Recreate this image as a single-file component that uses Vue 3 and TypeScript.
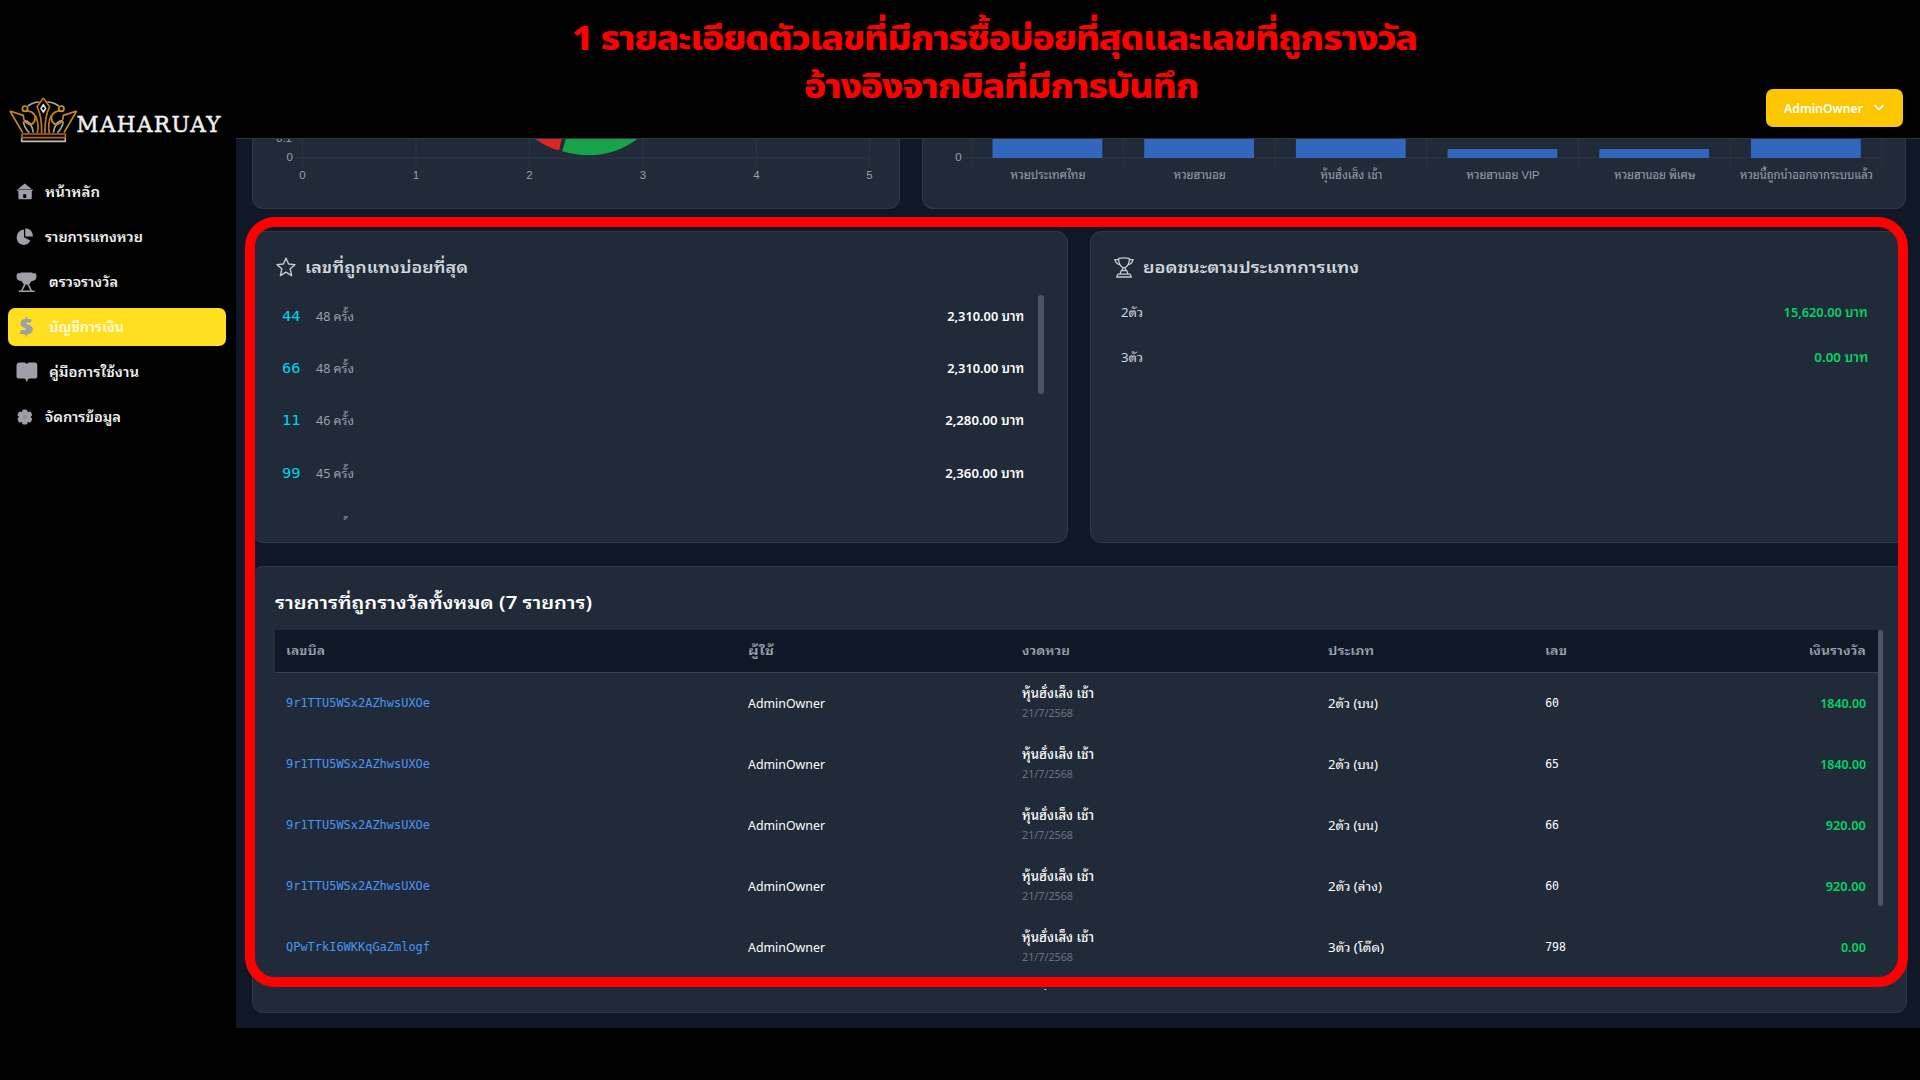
<script setup lang="ts">
import type { Directive } from 'vue'

// Scales a run of text horizontally so that it takes the given width in pixels.
const vFit: Directive<HTMLElement, number> = {
  mounted(el, binding) {
    const natural = el.getBoundingClientRect().width
    if (natural > 0) el.style.transform = `scaleX(${binding.value / natural})`
  },
}

const menu = [
  { icon: 'home', label: 'หน้าหลัก', w: 55 },
  { icon: 'pie', label: 'รายการแทงหวย', w: 98 },
  { icon: 'trophy', label: 'ตรวจรางวัล', w: 69, wide: true },
  { icon: 'dollar', label: 'บัญชีการเงิน', w: 75, wide: true, active: true },
  { icon: 'book', label: 'คู่มือการใช้งาน', w: 90, wide: true },
  { icon: 'gear', label: 'จัดการข้อมูล', w: 76 },
]

const lobes = [0, 60, 120, 180, 240, 300]

const xTicks = [49.5, 163, 276.5, 390, 503.5, 616.5]
const bars = [
  { label: 'หวยประเทศไทย', h: 20, w: 75 },
  { label: 'หวยฮานอย', h: 20, w: 52 },
  { label: 'หุ้นฮั่งเส็ง เช้า', h: 20, w: 62 },
  { label: 'หวยฮานอย VIP', h: 9, w: 73 },
  { label: 'หวยฮานอย พิเศษ', h: 9, w: 81 },
  { label: 'หวยนี้ถูกนำออกจากระบบแล้ว', h: 19, w: 133 },
]
const slot = 151.7

const frequent = [
  { num: '44', times: '48 ครั้ง', amount: '2,310.00 บาท', w: 77 },
  { num: '66', times: '48 ครั้ง', amount: '2,310.00 บาท', w: 77 },
  { num: '11', times: '46 ครั้ง', amount: '2,280.00 บาท', w: 79 },
  { num: '99', times: '45 ครั้ง', amount: '2,360.00 บาท', w: 79 },
  { num: '22', times: '45 ครั้ง', amount: '2,250.00 บาท', w: 79 },
]

const wins = [
  { type: '2ตัว', amount: '15,620.00 บาท', w: 84 },
  { type: '3ตัว', amount: '0.00 บาท', w: 54 },
]

const rows = [
  { id: '9r1TTU5WSx2AZhwsUXOe', type: '2ตัว (บน)', tw: 50, num: '60', prize: '1840.00', pw: 46 },
  { id: '9r1TTU5WSx2AZhwsUXOe', type: '2ตัว (บน)', tw: 50, num: '65', prize: '1840.00', pw: 46 },
  { id: '9r1TTU5WSx2AZhwsUXOe', type: '2ตัว (บน)', tw: 50, num: '66', prize: '920.00', pw: 40 },
  { id: '9r1TTU5WSx2AZhwsUXOe', type: '2ตัว (ล่าง)', tw: 54, num: '60', prize: '920.00', pw: 40 },
  { id: 'QPwTrkI6WKKqGaZmlogf', type: '3ตัว (โต๊ด)', tw: 56, num: '798', prize: '0.00', pw: 25 },
  { id: 'QPwTrkI6WKKqGaZmlogf', type: '3ตัว (โต๊ด)', tw: 56, num: '789', prize: '0.00', pw: 25 },
]
</script>

<template>
  <div class="page">
    <aside class="sidebar">
      <svg class="logo" width="226" height="50" viewBox="0 0 226 50">
        <g transform="translate(0,-14) scale(0.33333)" fill="none" stroke-width="5" stroke-linejoin="round">
          <path d="M84 78Q100 66 118 66M142 66Q160 66 176 78" stroke="#a9a9ad" />
          <path d="M72 122Q94 122 100 158M188 122Q166 122 160 158M70 124Q74 146 88 158M190 124Q186 146 172 158" stroke="#a6a6aa" />
          <path d="M30 93L68 158M30 93L70 106Q70 130 90 134Q108 130 105 108Q100 94 78 92" stroke="#c98a14" />
          <path d="M230 93L192 158M230 93L190 106Q190 130 170 134Q152 130 155 108Q160 94 182 92" stroke="#c98a14" />
          <path d="M130 54L149 80Q134 108 135 160M130 54L111 80Q126 108 125 160M106 106Q118 130 112 160M154 106Q142 130 148 160" stroke="#c07a14" />
          <circle cx="75" cy="86" r="8" stroke="#cf9515" /><circle cx="184" cy="86" r="8" stroke="#cf9515" />
          <path d="M130 74L137 85L130 96L123 85Z" stroke="#e0e0e0" />
          <path d="M66 162H196V173H66Z" stroke="#b06a16" />
          <path d="M65 175V184H196V175" stroke="#bdbdbd" />
        </g>
        <text x="76.5" y="38" font-size="21.5" textLength="144" lengthAdjust="spacing" class="brand">MAHARUAY</text>
      </svg>
      <nav class="menu">
        <a v-for="m in menu" :key="m.label" class="item" :class="{ active: m.active, wide: m.wide }">
          <svg class="ico" width="22" height="22" viewBox="0 0 22 22" fill="#9f9fa9">
            <path v-if="m.icon === 'home'" d="M8.8 2.6 15.6 8H2ZM.8 8.6H16.8V9.8H15.8V17Q15.8 18.2 14.6 18.2H3.6Q2.4 18.2 2.4 17V9.8H.8ZM7.2 13.2V17H10.2V13.2Z" fill-rule="evenodd" />
            <g v-else-if="m.icon === 'pie'"><path d="M8 3.4V11.2L14.4 14.6Q12.4 18.8 8 19Q.8 18.4.6 11.2Q1 4.4 8 3.4Z" /><path d="M9.2 2.2Q16.6 2.8 17 10.4H9.2Z" /></g>
            <g v-else-if="m.icon === 'trophy'"><path d="M4.6 1.4H16.4V2.2H19Q20.4 2.4 20.4 4V6.4Q20 9.6 15.6 10Q13.8 13.2 12 13.8H9Q7.2 13.2 5.4 10Q1 9.6.6 6.4V4Q.6 2.4 2 2.2H4.6Z" /><path d="M8.8 13.4 5.6 20M12.2 13.4 15.4 20M2.6 20.3H18.6" stroke="#9f9fa9" stroke-width="1.6" fill="none" /></g>
            <path v-else-if="m.icon === 'dollar'" d="M9.6 1H11.2V2.8L15.8 3.6 14.8 6.8 11 6.6Q9.4 7 11.6 8.4Q17 9.6 17 13.6Q16.6 17.6 11.2 18.4V20.6H9.6V18.6L3.8 17.8 5 14H9.4Q11 13.4 8.8 12Q4.4 10.6 4.4 7Q4.8 3.4 9.6 2.8Z" />
            <path v-else-if="m.icon === 'book'" d="M3.2 1.6H8.4Q10 1.8 10.8 3Q11.6 1.8 13.2 1.6H19Q21.2 1.8 21.3 4V15.6Q21.2 17.4 19.4 17.5H13Q11.6 17.8 11.3 20.6H10.3Q10 17.8 8.6 17.5H2.4Q.6 17.4.5 15.6V4Q.6 1.8 3.2 1.6Z" />
            <g v-else>
              <circle cx="8.8" cy="11" r="6" />
              <rect v-for="a in lobes" :key="a" x="6.2" y="3.4" width="5.2" height="6" rx="1.6" :transform="`rotate(${a} 8.8 11)`" />
              <circle cx="8.8" cy="11" r="2.2" fill="#8d8d98" />
            </g>
          </svg>
          <span v-fit="m.w" class="fit">{{ m.label }}</span>
        </a>
      </nav>
    </aside>

    <main class="main">
      <header class="topbar">
        <button class="user">
          <span v-fit="79" class="fit">AdminOwner</span>
          <svg width="12" height="8" viewBox="0 0 12 8"><path d="M1.5 1.2 6 5.6 10.5 1.2" fill="none" stroke="#fff" stroke-width="1.7" /></svg>
        </button>
      </header>

      <div class="content">
        <section class="charts">
          <div class="card chart donut">
            <svg width="647" height="70" viewBox="0 0 647 70">
              <g stroke="#2a3442" stroke-width="1">
                <path d="M43 19H616.5" /><path v-for="x in xTicks" :key="x" :d="`M${x} 0V27`" />
              </g>
              <path d="M282.4 0Q294 8.4 306 11.4L308.8 0Z" fill="#dc2626" />
              <path d="M312.6 0 309.2 12.2Q351 24.5 384.4 0Z" fill="#16a34a" />
              <g class="tick">
                <text x="39" y="2.6" text-anchor="end">0.1</text><text x="40" y="22" text-anchor="end">0</text>
                <text v-for="(x, i) in xTicks" :key="i" :x="x" y="39.8" text-anchor="middle">{{ i }}</text>
              </g>
            </svg>
          </div>
          <div class="card chart">
            <svg width="983" height="70" viewBox="0 0 983 70">
              <g stroke="#2a3442" stroke-width="1">
                <path d="M42 19H960" /><path v-for="n in 7" :key="n" :d="`M${48.7 + (n - 1) * slot} 0V27`" />
              </g>
              <rect v-for="(b, i) in bars" :key="i" :x="69.5 + i * slot" :y="19 - b.h" width="109.8" :height="b.h" fill="#3267bd" />
              <g class="tick">
                <text x="35.5" y="22" text-anchor="middle">0</text>
                <text v-for="(b, i) in bars" :key="i" :x="125 + i * slot - b.w / 2" y="40" :textLength="b.w" lengthAdjust="spacingAndGlyphs">{{ b.label }}</text>
              </g>
            </svg>
          </div>
        </section>

        <section class="pair">
          <div class="card panel">
            <h3 class="ptitle">
              <svg width="20" height="20" viewBox="0 0 20 20"><path d="M10 1.2 12.6 7 19 7.6 14.2 11.8 15.6 18.6 10 15.2 4.4 18.6 5.8 11.8 1 7.6 7.4 7Z" fill="none" stroke="#c6cad2" stroke-width="1.4" stroke-linejoin="round" /></svg>
              <span v-fit="163" class="fit">เลขที่ถูกแทงบ่อยที่สุด</span>
            </h3>
            <div class="scroll">
              <div class="flist">
                <div v-for="f in frequent" :key="f.num" class="frow">
                  <span class="fnum"><span v-fit="18.5" class="fit">{{ f.num }}</span></span>
                  <span class="ftimes"><span v-fit="38" class="fit">{{ f.times }}</span></span>
                  <span v-fit="f.w" class="fit right famount">{{ f.amount }}</span>
                </div>
              </div>
              <div class="bar"></div>
            </div>
          </div>
          <div class="card panel">
            <h3 class="ptitle">
              <svg width="20" height="21" viewBox="0 0 20 21" fill="none" stroke="#c6cad2" stroke-width="1.3" stroke-linejoin="round">
                <path d="M4.6 1.4Q10 .2 15.4 1.4Q15.4 8.4 10.6 10.8H9.4Q4.6 8.4 4.6 1.4ZM4.6 2.6H.9Q1.4 6.2 6 8M15.4 2.6H19.1Q18.6 6.2 14 8M9 10.8Q9 13 7.2 13.6L6 17.2H14L12.8 13.6Q11 13 11 10.8M7 13.7H13M4 17.2H16L17.4 20H2.6Z" />
              </svg>
              <span v-fit="216" class="fit">ยอดชนะตามประเภทการแทง</span>
            </h3>
            <div class="wlist">
              <div v-for="w in wins" :key="w.type" class="wrow">
                <span v-fit="22" class="fit">{{ w.type }}</span>
                <span v-fit="w.w" class="fit right wamount">{{ w.amount }}</span>
              </div>
            </div>
          </div>
        </section>

        <section class="card listing">
          <h2 class="ltitle"><span v-fit="317" class="fit">รายการที่ถูกรางวัลทั้งหมด (7 รายการ)</span></h2>
          <div class="tscroll">
            <div class="table">
              <div class="tr th">
                <span><span v-fit="39" class="fit">เลขบิล</span></span>
                <span><span v-fit="26" class="fit">ผู้ใช้</span></span>
                <span><span v-fit="48" class="fit">งวดหวย</span></span>
                <span><span v-fit="46" class="fit">ประเภท</span></span>
                <span><span v-fit="22" class="fit">เลข</span></span>
                <span class="r"><span v-fit="57" class="fit right">เงินรางวัล</span></span>
              </div>
              <div v-for="(r, i) in rows" :key="i" class="tr td">
                <span class="id"><span v-fit="144" class="fit">{{ r.id }}</span></span>
                <span><span v-fit="77" class="fit">AdminOwner</span></span>
                <span class="draw">
                  <span v-fit="72" class="fit name">หุ้นฮั่งเส็ง เช้า</span>
                  <span v-fit="51" class="fit date">21/7/2568</span>
                </span>
                <span><span v-fit="r.tw" class="fit">{{ r.type }}</span></span>
                <span class="num">{{ r.num }}</span>
                <span class="r prize"><span v-fit="r.pw" class="fit right">{{ r.prize }}</span></span>
              </div>
            </div>
            <div class="tbar"></div>
          </div>
        </section>
      </div>
    </main>

    <div class="caption">
      <div class="cline first"><span v-fit="845" class="fit mid">1 รายละเอียดตัวเลขที่มีการซื้อบ่อยที่สุดและเลขที่ถูกรางวัล</span></div>
      <div class="cline second"><span v-fit="394" class="fit mid">อ้างอิงจากบิลที่มีการบันทึก</span></div>
    </div>
    <div class="frame"></div>
  </div>
</template>

<style>
body { background: #000; }
</style>

<style scoped>
* { box-sizing: border-box; }
.page { position: relative; display: flex; width: 1920px; height: 1080px; overflow: hidden; background: #000; color: #fff; font-family: "Noto Sans", "Noto Sans Thai Looped", "Noto Looped Thai", "Loma", "Waree", "Garuda", "Noto Sans Thai", sans-serif; font-size: 13px; line-height: 20px; }
.fit { display: inline-block; white-space: nowrap; transform-origin: left center; vertical-align: top; }
.fit.right { transform-origin: right center; }
.fit.mid { transform-origin: center; }
.sidebar { width: 236px; flex: none; padding-top: 94px; }
.logo { display: block; }
.brand { font-family: "DejaVu Serif", serif; fill: #f0f0f0; stroke: #f0f0f0; stroke-width: 0.5; }
.menu { display: flex; flex-direction: column; padding: 29px 10px 0 8px; gap: 7px; }
.item { display: flex; align-items: center; height: 38px; padding-left: 8px; border-radius: 7px; font-weight: 600; line-height: 20px; color: #f0f0f0; gap: 7px; }
.item.wide { gap: 11px; }
.item.active { background: #ffdf20; color: #fffbe0; }
.ico { flex: none; }
.main { flex: 1; min-width: 0; }
.topbar { height: 138px; display: flex; justify-content: flex-end; padding: 89px 17px 0 0; }
.user { display: flex; align-items: center; justify-content: space-between; width: 137px; height: 38px; padding: 0 18px; border: 0; border-radius: 7px; background: #fdc700; color: #fff; font-family: inherit; font-size: 13px; font-weight: 600; line-height: 20px; }
.content { height: 890px; overflow: hidden; border-top: 1px solid #2b3544; background: #101726; padding: 0 13.5px 0 15.5px; }
.card { background: #212a38; border: 1px solid #2e3846; border-radius: 11px; }
.charts { display: flex; gap: 22px; }
.chart { width: 984px; height: 70px; border-top: 0; border-radius: 0 0 11px 11px; overflow: hidden; }
.chart.donut { width: 648.5px; flex: none; }
.chart svg { display: block; }
.tick { fill: #99a1ad; font-family: "Liberation Sans", "Noto Sans Thai Looped", "Noto Looped Thai", "Loma", "Waree", "Garuda", "Noto Sans Thai", sans-serif; font-size: 11.5px; }
.pair { display: flex; gap: 22px; margin-top: 22px; }
.panel { flex: 1; height: 312px; padding: 20px 23px 0; }
.ptitle { display: flex; align-items: center; gap: 9px; height: 30px; margin: 0; color: #d1d5dc; font-size: 16px; font-weight: 600; line-height: 28px; }
.scroll { display: flex; justify-content: space-between; height: 225px; margin-top: 13px; overflow: hidden; }
.flist { width: 749px; }
.frow { display: flex; align-items: center; height: 52.3px; padding: 0 0 10.5px 6px; }
.fnum { width: 34.5px; font-family: "DejaVu Sans Mono", monospace; font-size: 14px; color: #00d3f2; }
.ftimes { flex: 1; color: #99a1af; }
.famount { font-weight: 600; }
.bar { width: 6px; height: 99px; border-radius: 3px; background: #4a5565; }
.wlist { margin-top: 7.5px; padding: 0 14.5px 0 6.5px; }
.wrow { display: flex; justify-content: space-between; align-items: center; height: 45px; color: #d1d5dc; }
.wamount { font-weight: 600; color: #00d566; }
.listing { height: 447px; margin-top: 23px; padding: 21px 22px 0; }
.ltitle { height: 30px; margin: 0; font-size: 17px; font-weight: 600; line-height: 30px; }
.tscroll { display: flex; height: 359.5px; margin-top: 12px; overflow: hidden; }
.table { width: 1603px; flex: none; }
.tr { display: grid; grid-template-columns: 462px 274px 305.5px 217px 1fr 130px; align-items: center; padding: 0 11.5px; }
.th { height: 42.5px; padding-top: 1px; background: #101726; border-bottom: 1px solid #364153; color: #99a1af; font-size: 12px; font-weight: 600; }
.td { height: 61.1px; border-bottom: 1px solid #202b3a; }
.r { text-align: right; }
.id { color: #4795f5; font-family: "DejaVu Sans Mono", monospace; font-size: 11.5px; }
.num { padding-left: 0.7px; font-family: "DejaVu Sans Mono", monospace; font-size: 11.5px; }
.draw { display: flex; flex-direction: column; align-items: flex-start; line-height: 20px; }
.name { font-weight: 500; }
.date { color: #6a7282; font-size: 11px; }
.prize { color: #00d566; font-weight: 600; }
.tbar { width: 5.5px; height: 276px; border-radius: 3px; background: #4a5565; }
.caption { position: absolute; left: 0; top: 13px; width: 1989px; color: #f00; font-family: "Noto Sans", "Noto Sans Thai", sans-serif; font-weight: 800; font-size: 34px; line-height: 48px; letter-spacing: -1.2px; text-align: center; }
.cline { height: 48px; }
.cline.second { padding-left: 12px; }
.frame { position: absolute; left: 245px; top: 217px; width: 1663px; height: 770px; border: 10px solid #f00; border-radius: 30px; }
</style>
